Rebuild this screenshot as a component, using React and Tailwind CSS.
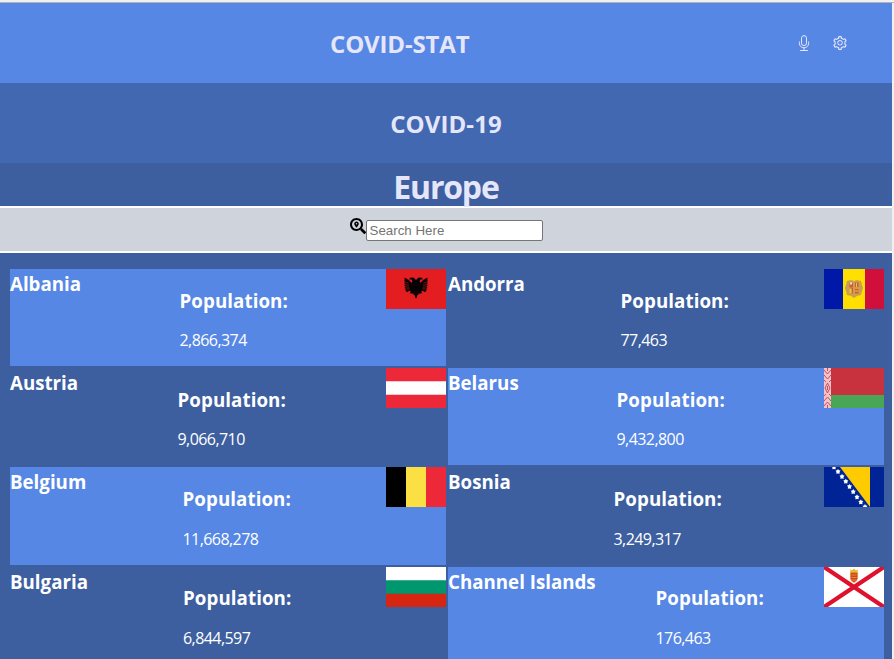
import { AiOutlineSetting } from 'react-icons/ai';
import { FaSearchLocation } from 'react-icons/fa';

const flagClass = 'block h-10 w-[60px] shrink-0';

function MicIcon() {
  return (
    <svg width="16" height="16" viewBox="0 0 16 16" fill="none" stroke="currentColor" strokeLinecap="round">
      <rect x="5.5" y="0.600" width="5" height="10" rx="2.5" />
      <path d="M3.400 7v1.500a4.600 4.300 0 0 0 9.200 0V7M8 13v2.400M4.500 15.500h7" />
    </svg>
  );
}

function EagleHalf() {
  return (
    <>
      <path
        fill="#090204"
        d="M30.200 12l-1-2-2-1.500-3 .3-1.200 1.400 2.600.4.800 2-1 1.200-2.500-2.800-4.400-2.500.3 2-.6.3.7 1.500-.7.300.8 1.500-.8.300.9 1.500-.8.300 1 1.600-.8.300 1.200 1.500-1 .7 1.600.8-1.300 1.300 1.700-.1.500 1 1.800-1.300 1.700-.2-.7 2.700 1.200-.4.700 1.200 1.200-1.400.8 2.300.9-.200.600 2.800.8.500z"
      />
      <path stroke="#e41e20" strokeWidth=".5" d="M18.500 12.500l4 2M18.500 15l4.500 1.500M19 17.600l4 .800M20 20l3.500-.100" />
    </>
  );
}

function AlbaniaFlag() {
  return (
    <svg className={flagClass} viewBox="0 0 60 40">
      <path fill="#e41e20" d="M0 0h60v40H0z" />
      <EagleHalf />
      <g transform="translate(60 0) scale(-1 1)">
        <EagleHalf />
      </g>
    </svg>
  );
}

function AndorraFlag() {
  return (
    <svg className={flagClass} viewBox="0 0 60 40">
      <path fill="#0018a8" d="M0 0h19v40H0z" />
      <path fill="#fedf00" d="M19 0h22v40H19z" />
      <path fill="#d0103a" d="M41 0h19v40H41z" />
      <path
        fill="#c7a052"
        d="M23 12l4-1 3 1 3-1 4 1 1 4 1 3-1 3-1 4-4 1-3 2-3-2-4-1-1-4-1-3 1-3z"
      />
      <path fill="#d8582f" d="M25.500 14h3.500v4.500h-3.500zM31 13.500h3.500v4.500h-3.500zM31 20h3.500v4.500h-3.500zM27.500 19h1.500v5.500h-1.500z" />
      <path fill="#f5c030" d="M25.500 20h2v4h-2zM32 14h1v4h-1zM31 21.500h3.500v1h-3.500z" />
      <path fill="#eee3d5" d="M26 13.500h2v2h-2z" />
    </svg>
  );
}

function AustriaFlag() {
  return (
    <svg className={flagClass} viewBox="0 0 60 40">
      <path fill="#ed2939" d="M0 0h60v40H0z" />
      <path fill="#fff" d="M0 13.3h60v13.4H0z" />
    </svg>
  );
}

function BelarusFlag() {
  return (
    <svg className={flagClass} viewBox="0 0 60 40">
      <path fill="#c8313e" d="M0 0h60v27H0z" />
      <path fill="#4aa657" d="M0 27h60v13H0z" />
      <path fill="#efc4ca" d="M0 0h7v40H0z" />
      <g fill="none" stroke="#d34b5b" strokeWidth="1">
        <path d="M3.5 15l2.400 5-2.400 5-2.400-5zM3.500 18v4" />
        <path d="M0 2l3.500 4L7 2M0 7l3.500 4L7 7M0 12l2 2M7 12l-2 2M3.500 0v3" />
        <path d="M0 38l3.500-4L7 38M0 33l3.500-4L7 33M0 28l2-2M7 28l-2-2M3.500 40v-3" />
      </g>
    </svg>
  );
}

function BelgiumFlag() {
  return (
    <svg className={flagClass} viewBox="0 0 60 40">
      <path d="M0 0h20v40H0z" />
      <path fill="#fae042" d="M20 0h20v40H20z" />
      <path fill="#ed2939" d="M40 0h20v40H40z" />
    </svg>
  );
}

const bosniaStars = [
  [10, 0], [14, 4.5], [18, 9.5], [21.8, 14.3], [25.5, 19.5],
  [29.2, 24.6], [33, 30], [36.8, 35], [41, 39.6],
];

function BosniaFlag() {
  return (
    <svg className={flagClass} viewBox="0 0 60 40">
      <path fill="#002395" d="M0 0h60v40H0z" />
      <path fill="#fecb00" d="M16 0h30v40z" />
      {bosniaStars.map(([x, y]) => (
        <path
          key={x}
          fill="#fff"
          transform={`translate(${x} ${y})`}
          d="M0-2.500l.9 1.300 1.600.3-1 1.500.2 1.700L0 2l-1.700.3.2-1.700-1-1.500 1.600-.3z"
        />
      ))}
    </svg>
  );
}

function BulgariaFlag() {
  return (
    <svg className={flagClass} viewBox="0 0 60 40">
      <path fill="#fff" d="M0 0h60v14H0z" />
      <path fill="#00966e" d="M0 13.3h60V27H0z" />
      <path fill="#d62612" d="M0 26.7h60V40H0z" />
    </svg>
  );
}

function JerseyFlag() {
  return (
    <svg className={flagClass} viewBox="0 0 60 40">
      <path fill="#fff" d="M0 0h60v40H0z" />
      <path stroke="#df112d" strokeWidth="4.300" d="M0 0l60 40M60 0L0 40" />
      <path fill="#e8b92c" d="M26 2.5l2 1 2-2 2 2 2-1-.6 3.3h-6.8z" />
      <path fill="#d5402b" stroke="#d99a2b" strokeWidth=".8" d="M26.4 5.6h7.2v5.6q-.4 3-3.6 4.4-3.2-1.4-3.6-4.4z" />
      <path stroke="#e9a22f" strokeWidth=".8" d="M27.5 8h5M27.5 10.5h5M28 13h4" />
    </svg>
  );
}

const countries = [
  { name: 'Albania', population: '2,866,374', Flag: AlbaniaFlag, width: 'w-[71px]', light: true },
  { name: 'Andorra', population: '77,463', Flag: AndorraFlag, width: 'w-[77px]', light: false },
  { name: 'Austria', population: '9,066,710', Flag: AustriaFlag, width: 'w-[67px]', light: false },
  { name: 'Belarus', population: '9,432,800', Flag: BelarusFlag, width: 'w-[69px]', light: true },
  { name: 'Belgium', population: '11,668,278', Flag: BelgiumFlag, width: 'w-[77px]', light: true },
  { name: 'Bosnia', population: '3,249,317', Flag: BosniaFlag, width: 'w-[63px]', light: false },
  { name: 'Bulgaria', population: '6,844,597', Flag: BulgariaFlag, width: 'w-[78px]', light: false },
  { name: 'Channel Islands', population: '176,463', Flag: JerseyFlag, width: 'w-[147px]', light: true },
];

function CountryCard({ name, population, Flag, width, light }) {
  return (
    <li className={`flex h-[97.25px] items-start justify-between ${light ? 'bg-[#5687e4]' : 'bg-[#3d5fa0]'}`}>
      <h3 className={`${width} pt-0.5 text-[18.72px] leading-[26px] font-bold whitespace-nowrap`}>{name}</h3>
      <div className="w-[108px] pt-[18.7px]">
        <h3 className="text-[18.72px] leading-[26px] font-bold tracking-[0.08px] whitespace-nowrap">Population:</h3>
        <p className="mt-[15.5px] text-[16px] leading-[22px] tracking-[-0.56px]">{population}</p>
      </div>
      <Flag />
    </li>
  );
}

export default function App() {
  return (
    <div className="h-[659px] overflow-hidden bg-[#f0f0f0] pr-0.5 font-['Open_Sans','Noto_Sans',sans-serif] text-white">
      <div className="-mr-0.5 h-[3px] border-b border-[#b4b4b4]" />
      <div className="h-full bg-[#3d5fa0]">
        <header className="flex h-20 items-center bg-[#5687e4] text-[#e6e6fa]">
          <h2 className="flex-1 pt-0.5 pl-[330px] text-2xl font-bold tracking-[-0.15px]">COVID-STAT</h2>
          <div className="flex gap-5 pr-[44px]">
            <MicIcon />
            <AiOutlineSetting size={16} />
          </div>
        </header>
        <section className="flex h-20 items-center justify-center bg-[#4268b1] pt-0.5 text-[#e6e6fa]">
          <h2 className="text-2xl font-bold tracking-[0.1px]">COVID-19</h2>
        </section>
        <h1 className="h-[43px] text-center text-[32px] leading-[47px] font-bold tracking-[-1.2px] text-[#e6e6fa]">Europe</h1>
        <div className="flex h-[47px] items-start justify-center border-y-2 border-white bg-[#cfd4dc] pt-2.5">
          <FaSearchLocation size={16} className="text-black" />
          <input
            type="text"
            placeholder="Search Here"
            className="mt-0.5 h-[21px] w-[177px] rounded-xs border border-[#767676] bg-white px-[3px] font-['Liberation_Sans',Arial,sans-serif] text-[13.33px] text-black placeholder:text-[#757575]"
          />
        </div>
        <ul className="grid grid-cols-[436px_436px] gap-[2px] px-2.5 pt-[15.95px]">
          {countries.map((country) => (
            <CountryCard key={country.name} {...country} />
          ))}
        </ul>
      </div>
    </div>
  );
}
